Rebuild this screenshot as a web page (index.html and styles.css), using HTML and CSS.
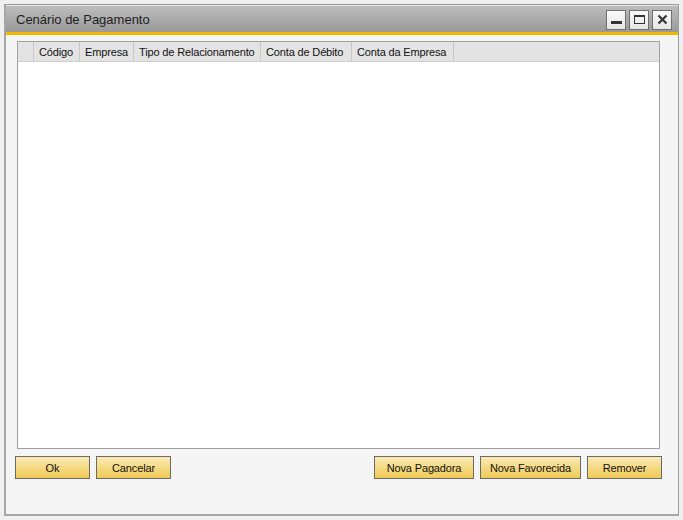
FILE: index.html
```html
<!DOCTYPE html>
<html>
<head>
<meta charset="utf-8">
<link rel="stylesheet" href="styles.css">
</head>
<body>
<div class="desk">
  <div class="window">
    <div class="titlebar">
      <span class="title">Cenário de Pagamento</span>
      <div class="controls">
        <div class="ctl"><svg width="13" height="13" viewBox="0 0 13 13"><rect x="1" y="8" width="11" height="3" fill="#333"/></svg></div>
        <div class="ctl"><svg width="13" height="13" viewBox="0 0 13 13"><rect x="1.5" y="2.5" width="10" height="8" fill="none" stroke="#333" stroke-width="1"/><rect x="1" y="2" width="11" height="2" fill="#333"/></svg></div>
        <div class="ctl"><svg width="13" height="13" viewBox="0 0 13 13"><path d="M2.5 2.5 L10.5 10.5 M10.5 2.5 L2.5 10.5" stroke="#333" stroke-width="2.2"/></svg></div>
      </div>
    </div>
    <div class="accent"></div>
    <div class="content">
      <div class="grid">
        <div class="header">
          <div class="hcell rowhead"></div>
          <div class="hcell c1">Código</div>
          <div class="hcell c2">Empresa</div>
          <div class="hcell c3">Tipo de Relacionamento</div>
          <div class="hcell c4">Conta de Débito</div>
          <div class="hcell c5">Conta da Empresa</div>
          <div class="hfill"></div>
        </div>
        <div class="gbody"></div>
      </div>
      <div class="buttons">
        <div class="group">
          <button class="btn w74">Ok</button>
          <button class="btn w74">Cancelar</button>
        </div>
        <div class="group">
          <button class="btn w99">Nova Pagadora</button>
          <button class="btn w100">Nova Favorecida</button>
          <button class="btn w74">Remover</button>
        </div>
      </div>
    </div>
  </div>
</div>
</body>
</html>
```
FILE: styles.css
```css
html, body {
  margin: 0;
  padding: 0;
}
body {
  background: #f0f0f0;
  font-family: "Liberation Sans", Arial, sans-serif;
  font-size: 11px;
  letter-spacing: -0.15px;
  color: #000;
  width: 683px;
  height: 520px;
  overflow: hidden;
}
.desk {
  padding: 4px 0 0 4px;
}
.window {
  width: 672px;
  height: 509px;
  border: 1px solid #9c9c9c;
  border-left: 2px solid #a6a6a6;
  border-bottom: 2px solid #a6a6a6;
  background: #f5f5f5;
  display: flex;
  flex-direction: column;
}
.titlebar {
  height: 26px;
  background: linear-gradient(#bdbdbd, #999999);
  display: flex;
  align-items: center;
  justify-content: space-between;
  padding: 0 6px 0 10px;
  border-top: 1px solid #e6e6e6;
}
.title {
  font-size: 13px;
  letter-spacing: 0;
  color: #1e1e1e;
}
.controls {
  display: flex;
  gap: 3px;
  margin-top: 1px;
}
.ctl {
  width: 18px;
  height: 18px;
  border: 1px solid #6f6f6f;
  background: linear-gradient(#fafafa, #e6e6e6);
  display: flex;
  align-items: center;
  justify-content: center;
}
.accent {
  height: 3px;
  background: #f5b800;
}
.content {
  flex: 1;
  padding: 6px 10px 0 9px;
  display: flex;
  flex-direction: column;
}
.grid {
  margin: 0 8px 0 2px;
  height: 406px;
  border: 1px solid #a0a0a0;
  background: #fff;
  display: flex;
  flex-direction: column;
}
.header {
  height: 19px;
  display: flex;
  background: #e3e3e3;
  border-bottom: 1px solid #cfcfcf;
}
.hcell {
  border-right: 1px solid #c8c8c8;
  display: flex;
  align-items: center;
  padding-left: 5px;
  box-sizing: border-box;
  white-space: nowrap;
  color: #111;
}
.rowhead { width: 16px; padding: 0; }
.c1 { width: 46px; }
.c2 { width: 54px; }
.c3 { width: 127px; }
.c4 { width: 91px; }
.c5 { width: 102px; }
.hfill { flex: 1; }
.gbody { flex: 1; }
.buttons {
  display: flex;
  justify-content: space-between;
  margin-top: 7px;
  padding-right: 6px;
}
.group {
  display: flex;
  gap: 6px;
}
.btn {
  height: 23px;
  border: 1px solid #6a6a6a;
  background: linear-gradient(#faeab6, #f0ca55);
  font-family: "Liberation Sans", Arial, sans-serif;
  font-size: 11px;
  letter-spacing: -0.15px;
  color: #111;
  padding: 0;
  margin: 0;
}
.w74 { width: 75px; }
.w99 { width: 100px; }
.w100 { width: 101px; }
```
